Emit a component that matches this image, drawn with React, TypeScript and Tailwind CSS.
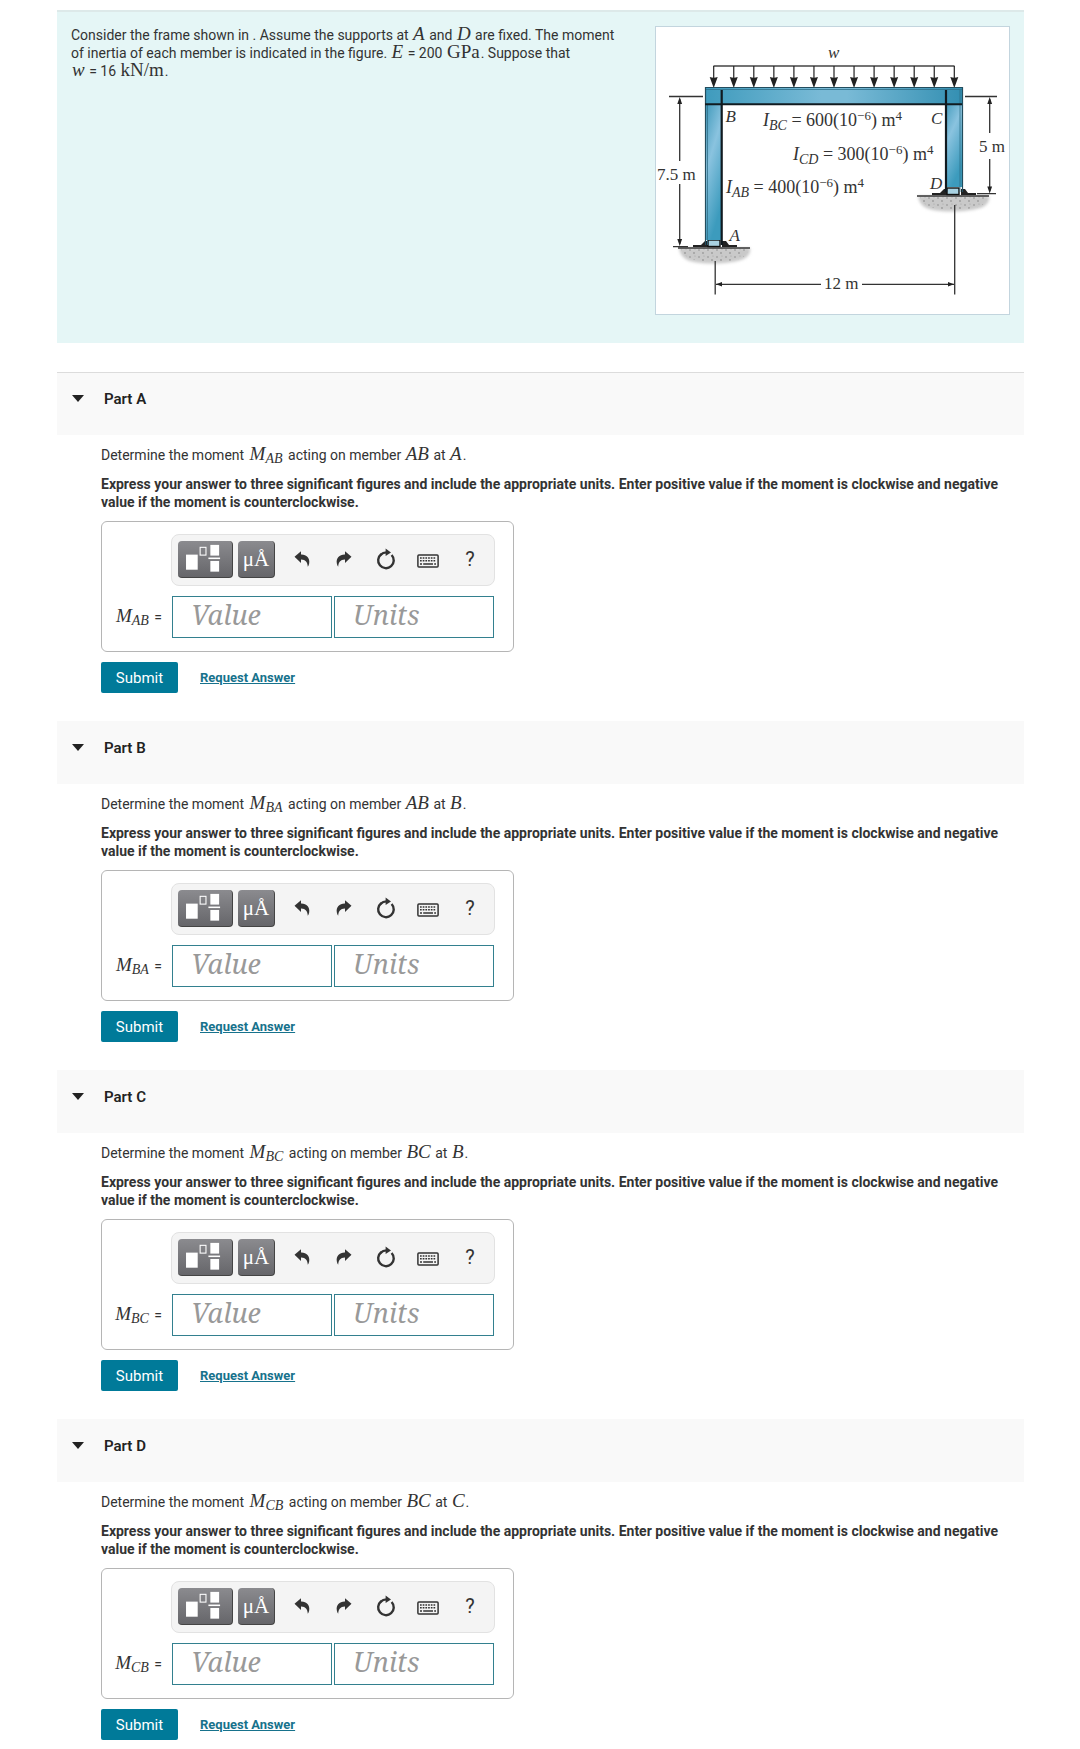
import React from 'react';

interface Part {
  id: string;
  sub: string;
  member: string;
  joint: string;
}

const parts: Part[] = [
  { id: 'A', sub: 'AB', member: 'AB', joint: 'A' },
  { id: 'B', sub: 'BA', member: 'AB', joint: 'B' },
  { id: 'C', sub: 'BC', member: 'BC', joint: 'B' },
  { id: 'D', sub: 'CB', member: 'BC', joint: 'C' },
];

const MathText: React.FC<{ children: React.ReactNode; upright?: boolean }> = ({ children, upright }) => (
  <span className={`mx-px font-['Liberation_Serif',serif] text-[19px] leading-[0] ${upright ? '' : 'italic'}`}>{children}</span>
);

const Moment: React.FC<{ sub: string }> = ({ sub }) => (
  <span className="mx-0.5 font-['Liberation_Serif',serif] text-[19px] leading-[0] italic">
    M<sub className="bottom-[-3px] text-[14px]">{sub}</sub>
  </span>
);

const Inertia: React.FC<{ x: number; y: number; sub: string; value: string }> = ({ x, y, sub, value }) => (
  <text x={x} y={y} fontSize="18">
    <tspan fontStyle="italic">I</tspan>
    <tspan fontStyle="italic" fontSize="14" dy="4">{sub}</tspan>
    <tspan dy="-4"> = {value}(10</tspan>
    <tspan fontSize="13" dy="-6">−6</tspan>
    <tspan dy="6">) m</tspan>
    <tspan fontSize="13" dy="-6">4</tspan>
  </text>
);

const Support: React.FC<{ x: number; y: number }> = ({ x, y }) => (
  <g transform={`translate(${x} ${y})`}>
    <path d="M-36 0H35C36 6 32 10 26 12C14 16 -10 17 -25 13C-32 11 -35 6 -36 0Z" fill="#c9c9c9" filter="url(#soft)" />
    <path d="M-34 0H33C33 5 30 9 24 11C14 14 -10 15 -23 11C-30 9 -33 5 -34 0Z" fill="url(#grit)" />
    <path d="M-37 0H35" stroke="#333" strokeWidth="1.6" />
    <path d="M-22 -1V-3H-14L-10 -7H-6V-1ZM22 -1V-3H14L11 -7H7V-1Z" fill="#222" />
    <rect x="-7" y="-8" width="12" height="6.5" fill="#a9d2e2" stroke="#111" strokeWidth="1.4" />
  </g>
);

const Figure: React.FC = () => (
  <svg
    viewBox="1 1 353 287"
    className="block w-full"
    role="img"
    aria-label="Frame ABCD with distributed load w"
    fontFamily="'Liberation Serif', serif"
    fontSize="17"
    fill="#333"
  >
    <defs>
      <linearGradient id="beam" x1="0" x2="1">
        <stop offset="0" stopColor="#3f9bbd" />
        <stop offset="0.45" stopColor="#79bad6" />
        <stop offset="0.55" stopColor="#79bad6" />
        <stop offset="1" stopColor="#338fb2" />
      </linearGradient>
      <linearGradient id="column" x1="0" y1="0" x2="0.35" y2="1">
        <stop offset="0" stopColor="#2e8fb2" />
        <stop offset="0.5" stopColor="#8ac3df" />
        <stop offset="1" stopColor="#3c9bbd" />
      </linearGradient>
      <pattern id="grit" width="9" height="7" patternUnits="userSpaceOnUse">
        <circle cx="2" cy="2" r="0.8" fill="#8b8b8b" />
        <circle cx="6" cy="5" r="0.9" fill="#9b9b9b" />
        <circle cx="7" cy="1" r="0.6" fill="#a5a5a5" />
      </pattern>
      <filter id="soft" x="-20%" y="-40%" width="140%" height="180%">
        <feGaussianBlur stdDeviation="1.5" />
      </filter>
    </defs>

    {/* distributed load */}
    <path d="M58.5 40H299.5" stroke="#444" strokeWidth="1.3" />
    {Array.from({ length: 13 }, (_, i) => (
      <g key={i} transform={`translate(${58.7 + i * 20.05} 40)`}>
        <path d="M0 0V14" stroke="#222" strokeWidth="1.2" />
        <path d="M-4 11Q0 12.5 4 11L0 22Z" fill="#222" />
      </g>
    ))}
    <text x="173" y="32" fontStyle="italic">w</text>

    <Support x={60} y={222} />
    <Support x={299} y={170} />

    {/* members */}
    <rect x="50.5" y="62" width="16" height="152" fill="url(#column)" />
    <rect x="291" y="62" width="16" height="99" fill="url(#column)" />
    <rect x="50.5" y="62" width="257" height="16" fill="url(#beam)" />
    <path d="M50.5 219V61.5H307.5V166" fill="none" stroke="#234d5e" strokeWidth="1.2" />
    <path d="M52.5 79V219M305 64V166M51 63.5H307" fill="none" stroke="#2f6f88" strokeWidth="0.8" />
    <path d="M50 78.3H307" stroke="#111b20" strokeWidth="2" />
    <path d="M66.7 64V219M291 64V166" stroke="#101a20" strokeWidth="2.2" />

    {/* dimensions */}
    <g stroke="#333" strokeWidth="1.3">
      <path d="M14 70.5H48M24.7 73V135M24.7 158V218M18 220.7H33" />
      <path d="M310 70.5H342M334.7 73V107M334.7 133V165M322 167.7H341" />
      <path d="M60.2 235V268.5M61 258.3H166M207 258.3H299M299.7 179V268.5" />
    </g>
    <g fill="#222">
      <path d="M24.7 71L22.3 78H27.1ZM24.7 220L22.3 213H27.1Z" />
      <path d="M334.7 71L332.3 78H337.1ZM334.7 167.5L332.3 160.5H337.1Z" />
      <path d="M61 258.3L67 256.1V260.5ZM299 258.3L293 256.1V260.5Z" />
    </g>
    <text x="2" y="154">7.5 m</text>
    <text x="324" y="126">5 m</text>
    <text x="169" y="263">12 m</text>

    <g fontStyle="italic">
      <text x="70.5" y="96">B</text>
      <text x="276" y="98">C</text>
      <text x="74.5" y="215">A</text>
      <text x="275" y="163">D</text>
    </g>
    <Inertia x={108} y={100} sub="BC" value="600" />
    <Inertia x={138} y={134} sub="CD" value="300" />
    <Inertia x={71} y={167} sub="AB" value="400" />
  </svg>
);

const UndoIcon: React.FC<{ className?: string }> = ({ className }) => (
  <svg viewBox="0 0 16 16" className={`h-4 w-4 ${className ?? ''}`} fill="#333">
    <path d="M0.5 5.8L7 0.3V3.6C12.5 3.4 16 7 15.2 12.2C15 13.6 14.5 14.8 13.8 15.8C13.6 11.6 11.5 8.5 7 8.6V12Z" />
  </svg>
);

const ResetIcon: React.FC = () => (
  <svg viewBox="0 0 20 22" className="h-[22px] w-5" fill="none">
    <path d="M5.2 6.2A7.8 7.8 0 1 0 15.6 7" stroke="#333" strokeWidth="2.4" />
    <path d="M4.6 6.8Q7 4.4 10.5 4.4" stroke="#333" strokeWidth="2.4" />
    <path d="M9.6 0.6L15 4.4L9.6 8Z" fill="#333" />
  </svg>
);

const KeyboardIcon: React.FC = () => (
  <svg viewBox="0 0 22 14" className="mt-1 h-3.5 w-[22px]" fill="none" stroke="#333">
    <rect x="0.9" y="0.9" width="20.2" height="12.2" rx="1" strokeWidth="1.5" />
    <path d="M3 4H19M3 6.8H19" strokeWidth="1.6" strokeDasharray="1.7 1" />
    <path d="M3 10H5M6.2 10H16M17.2 10H19" strokeWidth="1.6" />
  </svg>
);

const TemplateIcon: React.FC = () => (
  <svg viewBox="0 0 55 37" className="h-full w-full" fill="#fff">
    <rect x="8" y="14" width="12" height="15.5" />
    <rect x="22.5" y="6.5" width="6" height="8" fill="none" stroke="#fff" strokeWidth="1.1" />
    <rect x="33" y="4" width="9" height="11" />
    <rect x="31" y="17" width="12" height="1.6" />
    <rect x="33" y="20.5" width="9" height="11" />
  </svg>
);

const toolButton = 'flex h-[37px] w-[42px] items-center justify-center';
const darkButton =
  'h-[37px] overflow-hidden rounded border-r border-b border-[#444] bg-linear-to-b from-[#8b8b8f] to-[#66666a] text-white';
const field =
  "h-[42px] w-40 border border-[#33808f] bg-white pb-1.5 pl-[18px] font-['Noto_Serif','DejaVu_Serif_Condensed','DejaVu_Serif',serif] text-[27px] italic text-[#333] outline-none placeholder:text-[#999]";

const Toolbar: React.FC = () => (
  <div className="flex h-[52px] w-[324px] items-center rounded-lg border border-[#e2e2e2] bg-[#f4f4f4] pb-0.5 pl-1.5">
    <button type="button" aria-label="Templates" className={`${darkButton} w-[55px]`}>
      <TemplateIcon />
    </button>
    <button type="button" aria-label="Symbols" className={`${darkButton} ml-[5px] w-[37px] pt-0.5 font-['Liberation_Serif',serif] text-[21px] leading-none`}>
      μÅ
    </button>
    <div className="ml-1.5 flex">
      <button type="button" aria-label="Undo" className={toolButton}><UndoIcon /></button>
      <button type="button" aria-label="Redo" className={toolButton}><UndoIcon className="-scale-x-100" /></button>
      <button type="button" aria-label="Reset" className={toolButton}><ResetIcon /></button>
      <button type="button" aria-label="Keyboard" className={toolButton}><KeyboardIcon /></button>
      <button type="button" aria-label="Help" className={`${toolButton} text-xl text-[#333]`}>?</button>
    </div>
  </div>
);

const PartSection: React.FC<{ part: Part; first: boolean }> = ({ part, first }) => (
  <section className="pb-7">
    <button
      type="button"
      className={`flex h-[63px] w-full items-start border-t bg-[#f9f9f9] pt-4 pl-[15px] text-left ${first ? 'border-[#dcdcdc]' : 'border-[#f9f9f9]'}`}
    >
      <svg viewBox="0 0 12 7" className="mt-1.5 h-[7px] w-3" fill="#222"><path d="M0 0H12L6 7Z" /></svg>
      <h2 className="ml-5 text-[15px] leading-5 font-semibold text-[#222]">Part {part.id}</h2>
    </button>

    <div className="pt-[11px] pl-11">
      <p>
        Determine the moment <Moment sub={part.sub} /> acting on member <MathText>{part.member}</MathText> at{' '}
        <MathText>{part.joint}</MathText>.
      </p>
      <p className="mt-[11px] font-bold">
        Express your answer to three significant figures and include the appropriate units. Enter positive value if the
        moment is clockwise and negative value if the moment is counterclockwise.
      </p>

      <form onSubmit={(e) => e.preventDefault()}>
        <div className="mt-2.5 flex h-[131px] w-[413px] flex-col items-end rounded-md border border-[#b5b5b5] pt-3 pr-[18px]">
          <Toolbar />
          <div className="mt-2.5 flex items-center gap-0.5 pr-px">
            <label htmlFor={`value-${part.id}`} className="mr-2">
              <Moment sub={part.sub} /> =
            </label>
            <input id={`value-${part.id}`} placeholder="Value" className={field} />
            <input id={`units-${part.id}`} aria-label="Units" placeholder="Units" className={field} />
          </div>
        </div>
        <div className="mt-2.5 flex items-center">
          <button type="submit" className="h-[31px] w-[77px] rounded-xs bg-[#007a99] text-[15px] text-white">
            Submit
          </button>
          <a href="#" className="ml-[22px] text-[13px] font-bold text-[#17728c] underline">
            Request Answer
          </a>
        </div>
      </form>
    </div>
  </section>
);

const App: React.FC = () => {
  return (
    <div className="min-h-screen bg-white pt-2.5 pr-14 pl-[57px] font-[Roboto,sans-serif] text-sm leading-[18px] text-[#333]">
      <header className="flex items-start justify-between border-t-2 border-[#dde9e9] bg-[#e5f6f6] pt-3.5 pr-3.5 pb-7 pl-3.5">
        <p className="max-w-[555px]">
          Consider the frame shown in . Assume the supports at <MathText>A</MathText> and <MathText>D</MathText> are
          fixed. The moment of inertia of each member is indicated in the figure. <MathText>E</MathText> = 200{' '}
          <MathText upright>GPa</MathText>. Suppose that
          <br />
          <MathText>w</MathText> = 16 <MathText upright>kN/m</MathText>.
        </p>
        <div className="w-[355px] shrink-0 border border-[#c3d5de] bg-white">
          <Figure />
        </div>
      </header>

      <main className="mt-[29px]">
        {parts.map((part, i) => (
          <PartSection key={part.id} part={part} first={i === 0} />
        ))}
      </main>
    </div>
  );
};

export default App;
